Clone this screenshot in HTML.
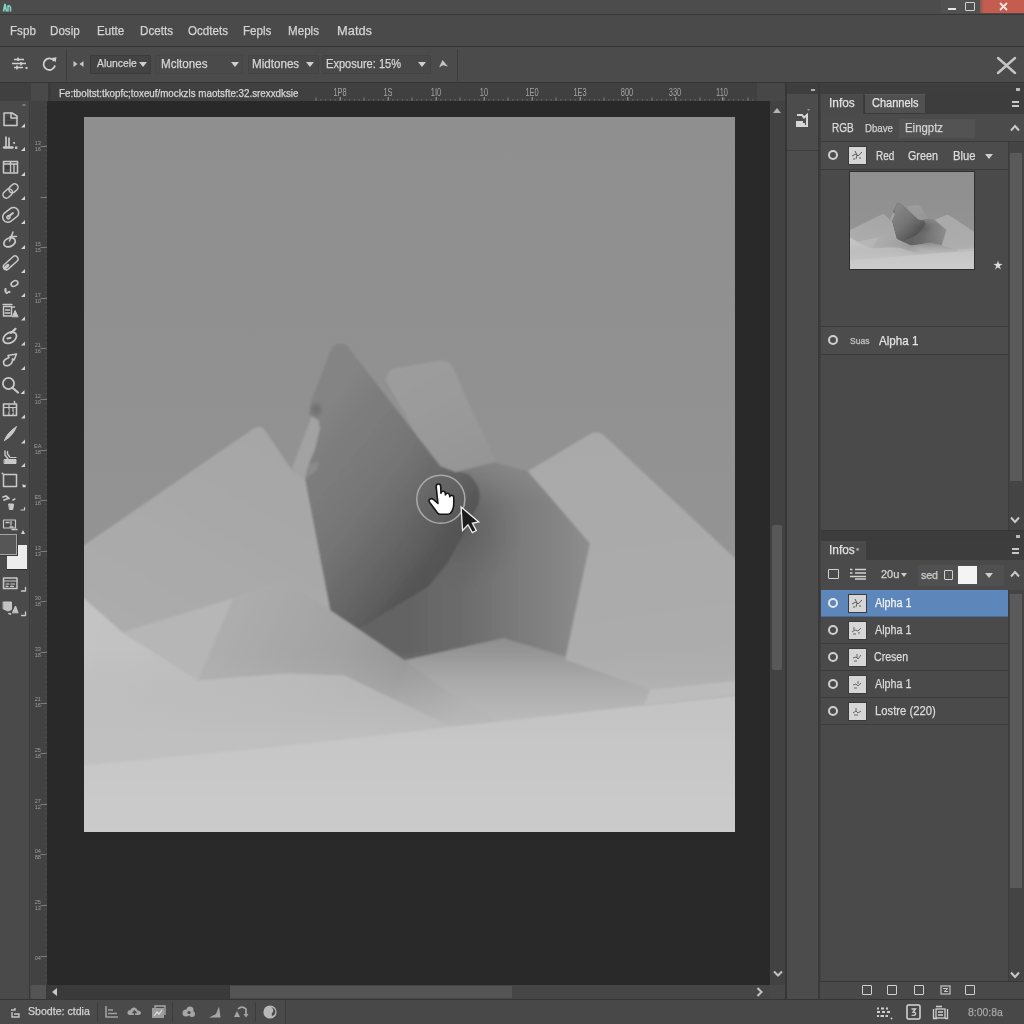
<!DOCTYPE html>
<html><head><meta charset="utf-8"><title>Editor</title>
<style>
*{box-sizing:border-box;margin:0;padding:0}
html,body{width:1024px;height:1024px;overflow:hidden;background:#474747}
body{position:relative;font-family:"Liberation Sans",sans-serif;color:#d2d2d2;font-size:12px}
.a{position:absolute}
.t{position:absolute;white-space:nowrap;line-height:1;transform-origin:0 50%;-webkit-text-stroke:.25px currentColor}
#titlebar{left:0;top:0;width:1024px;height:14px;background:#4c4c4c}
#menubar{left:0;top:14px;width:1024px;height:33px;background:#4a4a4a;border-top:1px solid #383838;border-bottom:1px solid #333}
#optbar{left:0;top:47px;width:1024px;height:36px;background:#4b4b4b;border-bottom:1px solid #353535}
#menubar .t{top:10px;font-size:12.5px;color:#d4d4d4;transform:scaleX(.93)}
#optbar .t{font-size:12.5px;color:#d6d6d6;top:11px;transform:scaleX(.93)}
.box{position:absolute;top:8px;height:19px;background:#434343;border:1px solid #3b3b3b;border-radius:1px}
.tri{position:absolute;width:0;height:0;border-left:4px solid transparent;border-right:4px solid transparent;border-top:5px solid #cfcfcf}
.triu{position:absolute;width:0;height:0;border-left:4px solid transparent;border-right:4px solid transparent;border-bottom:5px solid #bdbdbd}
#toolbar{left:0;top:83px;width:30px;height:917px;background:#4a4a4a;border-right:1px solid #3a3a3a}
#vruler{left:31px;top:100px;width:16px;height:885px;background:#424242}
#hruler{left:46px;top:83px;width:740px;height:18px;background:#404040}
#stage{left:47px;top:101px;width:723px;height:884px;background:#292929}
#vscroll{left:770px;top:101px;width:16px;height:884px;background:#424242}
#hscroll{left:46px;top:985px;width:724px;height:14px;background:#464646}
#status{left:0;top:999px;width:1024px;height:25px;background:#484848;border-top:1px solid #353535}
#midcol{left:785px;top:83px;width:35px;height:916px;background:#4c4c4c;border-left:2px solid #363636;border-right:2px solid #3a3a3a}
#rp{left:820px;top:83px;width:204px;height:916px;background:#4a4a4a}
.row{position:absolute;left:0;width:188px;height:27px;border-bottom:1px solid #3c3c3c}
.row .t{font-size:12.5px;color:#dcdcdc;top:7px}
.eye{position:absolute;left:8px;top:8px;width:10px;height:10px;border:2.2px solid #d0d0d0;border-radius:50%}
.th{position:absolute;left:27.5px;top:3.5px;width:19px;height:19px;background:#d6d6d6;border:1px solid #3a3a3a;overflow:hidden}
</style></head><body>
<!--TOP-->
<div class="a" id="titlebar">
<svg class="a" style="left:2px;top:2px" width="10" height="11" viewBox="0 0 10 11"><path d="M1.5,9.5 L3,2 L4.5,9.5 M6,9.5 L6,4 Q8.5,3.5 8.5,6 L8.5,9.5" fill="none" stroke="#7fd8c4" stroke-width="1.6"/></svg>
<div class="a" style="left:941px;top:0;width:41px;height:13px;background:#515151"></div><div class="a" style="left:948px;top:7.5px;width:8px;height:2.5px;background:#e4e4e4"></div>
<div class="a" style="left:965px;top:1.5px;width:10px;height:9px;border:1.5px solid #d0d0d0;border-radius:1px"></div>
<div class="a" style="left:980px;top:0;width:44px;height:13px;background:linear-gradient(90deg,#8a5750 0,#c45d4f 4px,#c45d4f 100%)"></div>
<svg class="a" style="left:999px;top:1.5px" width="9" height="9" viewBox="0 0 9 9"><path d="M1,1 L8,8 M8,1 L1,8" stroke="#f0e4e2" stroke-width="1.9" fill="none"/></svg>
</div>
<div class="a" id="menubar">
<span class="t" style="left:10px">Fspb</span>
<span class="t" style="left:50px">Dosip</span>
<span class="t" style="left:97px">Eutte</span>
<span class="t" style="left:140px">Dcetts</span>
<span class="t" style="left:188px">Ocdtets</span>
<span class="t" style="left:243px">Fepls</span>
<span class="t" style="left:288px">Mepls</span>
<span class="t" style="left:337px;transform:scaleX(1.03)">Matds</span>
</div>
<div class="a" id="optbar">
<svg class="a" style="left:11px;top:9px" width="18" height="16" viewBox="0 0 18 16"><path d="M3,3.5 H13 M1,7.5 H15 M3,11.5 H12 M7,1.5 V5 M10,6 V9.5 M6,9.5 V13.5" stroke="#d0d0d0" stroke-width="1.6" fill="none"/><rect x="14.5" y="11" width="2" height="2" fill="#d0d0d0"/></svg>
<svg class="a" style="left:41px;top:9px" width="18" height="17" viewBox="0 0 18 17"><path d="M13.2,5 A5.8,5.8 0 1 0 14,9.5" stroke="#d0d0d0" stroke-width="1.8" fill="none"/><path d="M10.5,2 L15.5,1.2 L14.6,6.2 Z" fill="#d0d0d0"/></svg>
<div class="a" style="left:66px;top:2px;width:1px;height:32px;background:#3c3c3c"></div>
<svg class="a" style="left:73px;top:13px" width="11" height="8" viewBox="0 0 11 8"><path d="M0.5,1 L4.5,4 L0.5,7 Z M10.5,1 L6.5,4 L10.5,7 Z" fill="#c8c8c8"/></svg>
<div class="box" style="left:90px;width:61px"></div>
<span class="t" style="left:97px;font-size:11.5px;transform:scaleX(.9)">Aluncele</span>
<div class="tri" style="left:139px;top:15px"></div>
<div class="box" style="left:155px;width:88px;background:#4a4a4a;border-color:#464646"></div>
<span class="t" style="left:161px">Mcltones</span>
<div class="tri" style="left:231px;top:15px"></div>
<div class="box" style="left:248px;width:71px;background:#484848;border-color:#434343"></div>
<span class="t" style="left:252px">Midtones</span>
<div class="tri" style="left:306px;top:15px"></div>
<div class="box" style="left:322px;width:109px;background:#484848;border-color:#434343"></div>
<span class="t" style="left:326px;transform:scaleX(.885)">Exposure: 15%</span>
<div class="tri" style="left:418px;top:15px"></div>
<svg class="a" style="left:438px;top:12px" width="11" height="10" viewBox="0 0 11 10"><path d="M1,8.5 L4.5,1 L10,7.5 L5,6.2 Z" fill="#c4c4c4"/></svg>
<div class="a" style="left:457px;top:2px;width:1px;height:32px;background:#3c3c3c"></div>
<svg class="a" style="left:996px;top:9px" width="21" height="19" viewBox="0 0 21 19"><path d="M2,2 L19,17 M19,2 L2,17" stroke="#c6c6c6" stroke-width="2.4" fill="none" stroke-linecap="round"/></svg>
</div>
<!--/TOP-->
<!--TB--><div class="a" id="toolbar">
<div class="a" style="left:0;top:0;width:30px;height:8px;background:#3e3e3e"></div>
<svg class="a" style="left:0;top:0" width="30" height="917" viewBox="0 83 30 917" fill="none" stroke="#c9c9c9" stroke-width="1.5" stroke-linejoin="round" stroke-linecap="round">
<path d="M1,87.5 H5" stroke="#9a9a9a" stroke-width="1.2"/>
<path d="M23,105 l2,0" stroke="#8a8a8a" stroke-width="1.6"/>
<!-- 1 -->
<path d="M4,113 H12 L17,116 V125.5 H4 Z"/><path d="M6,117 H11 V119.5 H6 Z M6,121 H14.5 V123.5 H6Z" fill="#3e3e3e" stroke="none"/><path d="M11,113 V118 H17"/>
<!-- 2 -->
<path d="M6,137 V146.5 M9,138 V146.5" stroke-width="1.7"/><path d="M4,147.5 H12.5" stroke-width="2.4"/><rect x="15" y="146.5" width="2.4" height="2.4" fill="#c9c9c9" stroke="none"/><rect x="13.2" y="142" width="1.8" height="1.8" fill="#c9c9c9" stroke="none"/>
<!-- 3 -->
<rect x="3.5" y="161.5" width="14" height="11.5"/><path d="M4,164 H17 M10.5,162 V172 M14,165 V172" stroke-width="1.3"/><rect x="5" y="165.5" width="4.5" height="3.5" fill="#3e3e3e" stroke="none"/>
<!-- 4 chain -->
<g transform="rotate(-42 10.5 191)"><rect x="1.5" y="187.6" width="10.5" height="6.8" rx="3.4"/><rect x="9.5" y="187.6" width="10" height="6.8" rx="3.4"/></g>
<!-- 5 chain -->
<g transform="rotate(-38 10.5 215)"><rect x="2" y="209.8" width="17.5" height="10.4" rx="5.2"/><path d="M8,215 H13.5" stroke-width="2"/><circle cx="7.5" cy="215.5" r="1.6"/></g>
<!-- 6 lasso -->
<g transform="rotate(-25 10 241)"><ellipse cx="9" cy="242" rx="6" ry="4.2" stroke-width="1.7"/></g><path d="M13,232 L9.5,241 M10,236.5 H16.5" stroke-width="1.5"/>
<!-- 7 pen -->
<g transform="rotate(-42 10.5 263)"><rect x="2" y="260" width="17.5" height="6" rx="3"/><path d="M2.5,263 H7" stroke-width="3"/></g>
<!-- 8 -->
<g transform="rotate(-30 14.5 283.5)"><ellipse cx="14.5" cy="283.5" rx="3.6" ry="2.5" stroke-width="1.6"/></g><path d="M5.5,289 V291.5 M8.5,292 H9.5 M6.5,293 H7" stroke-width="2.2"/>
<!-- 9 stamp -->
<rect x="3.5" y="306.5" width="8" height="9.5" stroke-width="1.4"/><path d="M3,304.5 H12 M5.5,310 H9.5 M5,313 H10" stroke-width="1.3"/><path d="M12.5,316.5 L15,310.5 L18,316.5 Z" fill="#c9c9c9" stroke-width="1"/><path d="M12,307 H14.5" stroke-width="1.6"/>
<!-- 10 -->
<g transform="rotate(-32 10 337)"><ellipse cx="9.5" cy="337.5" rx="7.2" ry="5" stroke-width="1.8"/><path d="M13,334 L19,333" stroke-width="2.2"/><path d="M7,337 l3,1" stroke-width="2"/></g>
<!-- 11 -->
<path d="M4,364.5 Q2.5,361 6,359 L9,357.5 L8,355.5 L16.5,354 L14,360 L12.5,358.8 Q13,363 9,365.2 Q5.5,366.5 4,364.5 Z" stroke-width="1.6"/>
<!-- 12 zoom -->
<circle cx="8.5" cy="383.5" r="5.6" stroke-width="1.8"/><path d="M12.8,388 L18,392.5" stroke-width="2.2"/>
<!-- 13 -->
<rect x="3.5" y="404" width="13" height="11.5" stroke-width="1.6"/><path d="M4,407.5 H16 M9,405 V415 M13,408 V415" stroke-width="1.2"/><path d="M5.5,410.5 H8 M10.5,412.5 H12" stroke-width="1.8" stroke="#3e3e3e"/><path d="M14.5,401.5 V404" stroke-width="1.4"/>
<!-- 14 brush -->
<path d="M4.5,440.5 Q6,434 16.5,426.5 Q13,436 4.5,440.5 Z" fill="#c9c9c9" stroke-width="1"/>
<!-- 15 stamp -->
<path d="M4.5,459.5 H16 V463.5 H4.5 Z" fill="#c9c9c9" stroke-width="1"/><path d="M5,451 V455 L8,459 M7.5,451.5 V454 L9.5,456.5" stroke-width="1.4"/><path d="M10,457.5 H16" stroke-width="1.2"/>
<!-- 16 rect -->
<rect x="3.5" y="474.5" width="13" height="12" stroke-width="1.5"/><circle cx="2.5" cy="473.5" r="1" fill="#c9c9c9" stroke="none"/>
<path d="M22.5,484 l2,1.2 l1,-1 l0.2,3 l-3,0z" fill="#ddd" stroke="none"/>
<!-- 17 bucket -->
<path d="M3,497 L6,496 L9,498.5 M4,500 L7,499" stroke-width="1.8"/><path d="M9,504 H13.5 L12.8,509.5 H9.8 Z" fill="#c9c9c9" stroke-width="1"/><path d="M13,500 L14.8,499" stroke-width="1.6"/>
<path d="M21,510 H24.5 V507.5" stroke-width="1.2"/>
<!-- 18 -->
<rect x="3.5" y="520" width="12" height="8" stroke-width="1.2"/><path d="M6,522.5 H9 M11,521.5 V525 M10,527 H13 M12,529.5 H17" stroke-width="1.3"/>
<!-- 20 -->
<rect x="3.5" y="578" width="13.5" height="10.5" stroke-width="1.5"/><path d="M4,581 H16.5 M6,584 H9 M11,584 H14.5 M6,586.3 H8 M10.5,586.3 H13.5" stroke-width="1.2"/>
<path d="M21.5,591 H25.5 V587.5" stroke-width="1.3"/>
<!-- 21 -->
<path d="M3.5,602 H11.5 V609.5 L8,611 L3.5,609 Z" fill="#c2c2c2" stroke-width="1"/><path d="M12.5,612.5 L15.5,606 L18,612.5 Z" fill="#c2c2c2" stroke-width="1"/><path d="M9,613.5 l1.5,0.6" stroke-width="1.6"/>
<path d="M21.5,615.5 H25.5 V612" stroke-width="1.3"/>
<g fill="#d4d4d4" stroke="none">
<path d="M21,127.5 L25,123.5 L25,127.5 Z"/><path d="M21,151 L25,147 L25,151 Z"/><path d="M21,176 L25,172 L25,176 Z"/><path d="M21,200 L25,196 L25,200 Z"/><path d="M21,224 L25,220 L25,224 Z"/>
<path d="M21,249 L25,245 L25,249 Z"/><path d="M21,273 L25,269 L25,273 Z"/><path d="M21,297 L25,293 L25,297 Z"/><path d="M21,320.5 L25,316.5 L25,320.5 Z"/><path d="M21,345.5 L25,341.5 L25,345.5 Z"/>
<path d="M21,370 L25,366 L25,370 Z"/><path d="M20.5,394 L24.5,390 L24.5,394 Z"/><path d="M21,418.5 L25,414.5 L25,418.5 Z"/><path d="M21,443.5 L25,439.5 L25,443.5 Z"/><path d="M21,467 L25,463 L25,467 Z"/>
<path d="M21,534 L23,530 L25,534 Z"/>
</g>
</svg>
<div class="a" style="left:7px;top:462px;width:20px;height:24px;background:#ececec;box-shadow:0 1px 0 #2e2e2e"></div>
<div class="a" style="left:-2px;top:451px;width:19px;height:21px;background:#565656;border:1.5px solid #a4a4a4;box-shadow:1px 1px 0 #3a3a3a"></div>
</div>
<!--/TB-->
<!--VR--><div class="a" id="vruler"><svg class="a" style="left:0;top:0;opacity:.99" width="17" height="885" viewBox="31 100 16 885"><path d="M40,146.5 H47" stroke="#7c7c7c" stroke-width="1"/><text x="37.3" y="144.8" font-size="5.6" fill="#9c9c9c" text-anchor="middle" font-family="Liberation Sans, sans-serif">13</text><text x="37.3" y="150.7" font-size="5.6" fill="#9c9c9c" text-anchor="middle" font-family="Liberation Sans, sans-serif">16</text><path d="M40,197.5 H47" stroke="#7c7c7c" stroke-width="1"/><path d="M40,247.5 H47" stroke="#7c7c7c" stroke-width="1"/><text x="37.3" y="246.0" font-size="5.6" fill="#9c9c9c" text-anchor="middle" font-family="Liberation Sans, sans-serif">15</text><text x="37.3" y="251.9" font-size="5.6" fill="#9c9c9c" text-anchor="middle" font-family="Liberation Sans, sans-serif">15</text><path d="M40,298.5 H47" stroke="#7c7c7c" stroke-width="1"/><text x="37.3" y="296.6" font-size="5.6" fill="#9c9c9c" text-anchor="middle" font-family="Liberation Sans, sans-serif">17</text><text x="37.3" y="302.5" font-size="5.6" fill="#9c9c9c" text-anchor="middle" font-family="Liberation Sans, sans-serif">10</text><path d="M40,348.5 H47" stroke="#7c7c7c" stroke-width="1"/><text x="37.3" y="347.2" font-size="5.6" fill="#9c9c9c" text-anchor="middle" font-family="Liberation Sans, sans-serif">21</text><text x="37.3" y="353.1" font-size="5.6" fill="#9c9c9c" text-anchor="middle" font-family="Liberation Sans, sans-serif">16</text><path d="M40,399.5 H47" stroke="#7c7c7c" stroke-width="1"/><text x="37.3" y="397.8" font-size="5.6" fill="#9c9c9c" text-anchor="middle" font-family="Liberation Sans, sans-serif">12</text><text x="37.3" y="403.7" font-size="5.6" fill="#9c9c9c" text-anchor="middle" font-family="Liberation Sans, sans-serif">10</text><path d="M40,450.5 H47" stroke="#7c7c7c" stroke-width="1"/><text x="37.3" y="448.4" font-size="5.6" fill="#9c9c9c" text-anchor="middle" font-family="Liberation Sans, sans-serif">EA</text><text x="37.3" y="454.3" font-size="5.6" fill="#9c9c9c" text-anchor="middle" font-family="Liberation Sans, sans-serif">18</text><path d="M40,500.5 H47" stroke="#7c7c7c" stroke-width="1"/><text x="37.3" y="499.0" font-size="5.6" fill="#9c9c9c" text-anchor="middle" font-family="Liberation Sans, sans-serif">E5</text><text x="37.3" y="504.9" font-size="5.6" fill="#9c9c9c" text-anchor="middle" font-family="Liberation Sans, sans-serif">18</text><path d="M40,551.5 H47" stroke="#7c7c7c" stroke-width="1"/><text x="37.3" y="549.6" font-size="5.6" fill="#9c9c9c" text-anchor="middle" font-family="Liberation Sans, sans-serif">13</text><text x="37.3" y="555.5" font-size="5.6" fill="#9c9c9c" text-anchor="middle" font-family="Liberation Sans, sans-serif">13</text><path d="M40,601.5 H47" stroke="#7c7c7c" stroke-width="1"/><text x="37.3" y="600.2" font-size="5.6" fill="#9c9c9c" text-anchor="middle" font-family="Liberation Sans, sans-serif">30</text><text x="37.3" y="606.1" font-size="5.6" fill="#9c9c9c" text-anchor="middle" font-family="Liberation Sans, sans-serif">18</text><path d="M40,652.5 H47" stroke="#7c7c7c" stroke-width="1"/><text x="37.3" y="650.8" font-size="5.6" fill="#9c9c9c" text-anchor="middle" font-family="Liberation Sans, sans-serif">33</text><text x="37.3" y="656.7" font-size="5.6" fill="#9c9c9c" text-anchor="middle" font-family="Liberation Sans, sans-serif">18</text><path d="M40,703.5 H47" stroke="#7c7c7c" stroke-width="1"/><text x="37.3" y="701.4" font-size="5.6" fill="#9c9c9c" text-anchor="middle" font-family="Liberation Sans, sans-serif">21</text><text x="37.3" y="707.3" font-size="5.6" fill="#9c9c9c" text-anchor="middle" font-family="Liberation Sans, sans-serif">16</text><path d="M40,753.5 H47" stroke="#7c7c7c" stroke-width="1"/><text x="37.3" y="752.0" font-size="5.6" fill="#9c9c9c" text-anchor="middle" font-family="Liberation Sans, sans-serif">25</text><text x="37.3" y="757.9" font-size="5.6" fill="#9c9c9c" text-anchor="middle" font-family="Liberation Sans, sans-serif">18</text><path d="M40,804.5 H47" stroke="#7c7c7c" stroke-width="1"/><text x="37.3" y="802.6" font-size="5.6" fill="#9c9c9c" text-anchor="middle" font-family="Liberation Sans, sans-serif">27</text><text x="37.3" y="808.5" font-size="5.6" fill="#9c9c9c" text-anchor="middle" font-family="Liberation Sans, sans-serif">12</text><path d="M40,854.5 H47" stroke="#7c7c7c" stroke-width="1"/><text x="37.3" y="853.2" font-size="5.6" fill="#9c9c9c" text-anchor="middle" font-family="Liberation Sans, sans-serif">04</text><text x="37.3" y="859.1" font-size="5.6" fill="#9c9c9c" text-anchor="middle" font-family="Liberation Sans, sans-serif">88</text><path d="M40,905.5 H47" stroke="#7c7c7c" stroke-width="1"/><text x="37.3" y="903.8" font-size="5.6" fill="#9c9c9c" text-anchor="middle" font-family="Liberation Sans, sans-serif">25</text><text x="37.3" y="909.7" font-size="5.6" fill="#9c9c9c" text-anchor="middle" font-family="Liberation Sans, sans-serif">13</text><path d="M40,956.5 H47" stroke="#7c7c7c" stroke-width="1"/><text x="37.3" y="960.3" font-size="5.6" fill="#9c9c9c" text-anchor="middle" font-family="Liberation Sans, sans-serif">04</text><path d="M44.5,105.0 H46.5 M44.5,110.1 H46.5 M44.5,115.1 H46.5 M44.5,120.2 H46.5 M44.5,125.2 H46.5 M44.5,130.3 H46.5 M44.5,135.4 H46.5 M44.5,140.4 H46.5 M44.5,145.5 H46.5 M44.5,150.5 H46.5 M44.5,155.6 H46.5 M44.5,160.7 H46.5 M44.5,165.7 H46.5 M44.5,170.8 H46.5 M44.5,175.8 H46.5 M44.5,180.9 H46.5 M44.5,186.0 H46.5 M44.5,191.0 H46.5 M44.5,196.1 H46.5 M44.5,201.1 H46.5 M44.5,206.2 H46.5 M44.5,211.3 H46.5 M44.5,216.3 H46.5 M44.5,221.4 H46.5 M44.5,226.4 H46.5 M44.5,231.5 H46.5 M44.5,236.6 H46.5 M44.5,241.6 H46.5 M44.5,246.7 H46.5 M44.5,251.7 H46.5 M44.5,256.8 H46.5 M44.5,261.9 H46.5 M44.5,266.9 H46.5 M44.5,272.0 H46.5 M44.5,277.0 H46.5 M44.5,282.1 H46.5 M44.5,287.2 H46.5 M44.5,292.2 H46.5 M44.5,297.3 H46.5 M44.5,302.3 H46.5 M44.5,307.4 H46.5 M44.5,312.5 H46.5 M44.5,317.5 H46.5 M44.5,322.6 H46.5 M44.5,327.6 H46.5 M44.5,332.7 H46.5 M44.5,337.8 H46.5 M44.5,342.8 H46.5 M44.5,347.9 H46.5 M44.5,352.9 H46.5 M44.5,358.0 H46.5 M44.5,363.1 H46.5 M44.5,368.1 H46.5 M44.5,373.2 H46.5 M44.5,378.2 H46.5 M44.5,383.3 H46.5 M44.5,388.4 H46.5 M44.5,393.4 H46.5 M44.5,398.5 H46.5 M44.5,403.5 H46.5 M44.5,408.6 H46.5 M44.5,413.7 H46.5 M44.5,418.7 H46.5 M44.5,423.8 H46.5 M44.5,428.8 H46.5 M44.5,433.9 H46.5 M44.5,439.0 H46.5 M44.5,444.0 H46.5 M44.5,449.1 H46.5 M44.5,454.1 H46.5 M44.5,459.2 H46.5 M44.5,464.3 H46.5 M44.5,469.3 H46.5 M44.5,474.4 H46.5 M44.5,479.4 H46.5 M44.5,484.5 H46.5 M44.5,489.6 H46.5 M44.5,494.6 H46.5 M44.5,499.7 H46.5 M44.5,504.7 H46.5 M44.5,509.8 H46.5 M44.5,514.9 H46.5 M44.5,519.9 H46.5 M44.5,525.0 H46.5 M44.5,530.0 H46.5 M44.5,535.1 H46.5 M44.5,540.2 H46.5 M44.5,545.2 H46.5 M44.5,550.3 H46.5 M44.5,555.3 H46.5 M44.5,560.4 H46.5 M44.5,565.5 H46.5 M44.5,570.5 H46.5 M44.5,575.6 H46.5 M44.5,580.6 H46.5 M44.5,585.7 H46.5 M44.5,590.8 H46.5 M44.5,595.8 H46.5 M44.5,600.9 H46.5 M44.5,605.9 H46.5 M44.5,611.0 H46.5 M44.5,616.1 H46.5 M44.5,621.1 H46.5 M44.5,626.2 H46.5 M44.5,631.2 H46.5 M44.5,636.3 H46.5 M44.5,641.4 H46.5 M44.5,646.4 H46.5 M44.5,651.5 H46.5 M44.5,656.5 H46.5 M44.5,661.6 H46.5 M44.5,666.7 H46.5 M44.5,671.7 H46.5 M44.5,676.8 H46.5 M44.5,681.8 H46.5 M44.5,686.9 H46.5 M44.5,692.0 H46.5 M44.5,697.0 H46.5 M44.5,702.1 H46.5 M44.5,707.1 H46.5 M44.5,712.2 H46.5 M44.5,717.3 H46.5 M44.5,722.3 H46.5 M44.5,727.4 H46.5 M44.5,732.4 H46.5 M44.5,737.5 H46.5 M44.5,742.6 H46.5 M44.5,747.6 H46.5 M44.5,752.7 H46.5 M44.5,757.7 H46.5 M44.5,762.8 H46.5 M44.5,767.9 H46.5 M44.5,772.9 H46.5 M44.5,778.0 H46.5 M44.5,783.0 H46.5 M44.5,788.1 H46.5 M44.5,793.2 H46.5 M44.5,798.2 H46.5 M44.5,803.3 H46.5 M44.5,808.3 H46.5 M44.5,813.4 H46.5 M44.5,818.5 H46.5 M44.5,823.5 H46.5 M44.5,828.6 H46.5 M44.5,833.6 H46.5 M44.5,838.7 H46.5 M44.5,843.8 H46.5 M44.5,848.8 H46.5 M44.5,853.9 H46.5 M44.5,858.9 H46.5 M44.5,864.0 H46.5 M44.5,869.1 H46.5 M44.5,874.1 H46.5 M44.5,879.2 H46.5 M44.5,884.2 H46.5 M44.5,889.3 H46.5 M44.5,894.4 H46.5 M44.5,899.4 H46.5 M44.5,904.5 H46.5 M44.5,909.5 H46.5 M44.5,914.6 H46.5 M44.5,919.7 H46.5 M44.5,924.7 H46.5 M44.5,929.8 H46.5 M44.5,934.8 H46.5 M44.5,939.9 H46.5 M44.5,945.0 H46.5 M44.5,950.0 H46.5 M44.5,955.1 H46.5 M44.5,960.1 H46.5 M44.5,965.2 H46.5 M44.5,970.3 H46.5 M44.5,975.3 H46.5 M44.5,980.4 H46.5" stroke="#505050" stroke-width="1"/></svg></div><!--/VR-->
<!--HR--><div class="a" id="hruler"><div class="a" style="left:-46px;top:0;width:46px;height:18px;background:#404040"></div><div class="a" style="left:-15px;top:0;width:17px;height:18px;background:#494949"></div><div class="a" style="left:2px;top:0;width:3px;height:18px;background:#3a3a3a"></div><span class="t" style="left:13px;top:4.5px;font-size:11px;color:#d8d8d8;transform:scaleX(.89)">Fe:tboltst:tkopfc;toxeuf/mockzls maotsfte:32.srexxdksie</span><svg class="a" style="left:0;top:0;opacity:.99" width="740" height="18" viewBox="46 83 740 18"><text transform="translate(340,95.8) scale(.73,1)" font-size="10.2" fill="#a4a4a4" text-anchor="middle" font-family="Liberation Sans, sans-serif">1P8</text><path d="M340.5,97 V100.5" stroke="#999" stroke-width="1"/><text transform="translate(388,95.8) scale(.73,1)" font-size="10.2" fill="#a4a4a4" text-anchor="middle" font-family="Liberation Sans, sans-serif">1S</text><path d="M388.5,97 V100.5" stroke="#999" stroke-width="1"/><text transform="translate(436,95.8) scale(.73,1)" font-size="10.2" fill="#a4a4a4" text-anchor="middle" font-family="Liberation Sans, sans-serif">1I0</text><path d="M436.5,97 V100.5" stroke="#999" stroke-width="1"/><text transform="translate(484,95.8) scale(.73,1)" font-size="10.2" fill="#a4a4a4" text-anchor="middle" font-family="Liberation Sans, sans-serif">10</text><path d="M484.5,97 V100.5" stroke="#999" stroke-width="1"/><text transform="translate(532,95.8) scale(.73,1)" font-size="10.2" fill="#a4a4a4" text-anchor="middle" font-family="Liberation Sans, sans-serif">1E0</text><path d="M532.5,97 V100.5" stroke="#999" stroke-width="1"/><text transform="translate(580,95.8) scale(.73,1)" font-size="10.2" fill="#a4a4a4" text-anchor="middle" font-family="Liberation Sans, sans-serif">1E3</text><path d="M580.5,97 V100.5" stroke="#999" stroke-width="1"/><text transform="translate(627,95.8) scale(.73,1)" font-size="10.2" fill="#a4a4a4" text-anchor="middle" font-family="Liberation Sans, sans-serif">800</text><path d="M627.5,97 V100.5" stroke="#999" stroke-width="1"/><text transform="translate(675,95.8) scale(.73,1)" font-size="10.2" fill="#a4a4a4" text-anchor="middle" font-family="Liberation Sans, sans-serif">330</text><path d="M675.5,97 V100.5" stroke="#999" stroke-width="1"/><text transform="translate(722,95.8) scale(.73,1)" font-size="10.2" fill="#a4a4a4" text-anchor="middle" font-family="Liberation Sans, sans-serif">110</text><path d="M722.5,97 V100.5" stroke="#999" stroke-width="1"/><path d="M316.0,99 V100.5 M320.8,99 V100.5 M325.6,99 V100.5 M330.4,99 V100.5 M335.2,99 V100.5 M340.0,99 V100.5 M344.8,99 V100.5 M349.6,99 V100.5 M354.4,99 V100.5 M359.2,99 V100.5 M364.0,99 V100.5 M368.8,99 V100.5 M373.6,99 V100.5 M378.4,99 V100.5 M383.2,99 V100.5 M388.0,99 V100.5 M392.8,99 V100.5 M397.6,99 V100.5 M402.4,99 V100.5 M407.2,99 V100.5 M412.0,99 V100.5 M416.8,99 V100.5 M421.6,99 V100.5 M426.4,99 V100.5 M431.2,99 V100.5 M436.0,99 V100.5 M440.8,99 V100.5 M445.6,99 V100.5 M450.4,99 V100.5 M455.2,99 V100.5 M460.0,99 V100.5 M464.8,99 V100.5 M469.6,99 V100.5 M474.4,99 V100.5 M479.2,99 V100.5 M484.0,99 V100.5 M488.8,99 V100.5 M493.6,99 V100.5 M498.4,99 V100.5 M503.2,99 V100.5 M508.0,99 V100.5 M512.8,99 V100.5 M517.6,99 V100.5 M522.4,99 V100.5 M527.2,99 V100.5 M532.0,99 V100.5 M536.8,99 V100.5 M541.6,99 V100.5 M546.4,99 V100.5 M551.2,99 V100.5 M556.0,99 V100.5 M560.8,99 V100.5 M565.6,99 V100.5 M570.4,99 V100.5 M575.2,99 V100.5 M580.0,99 V100.5 M584.8,99 V100.5 M589.6,99 V100.5 M594.4,99 V100.5 M599.2,99 V100.5 M604.0,99 V100.5 M608.8,99 V100.5 M613.6,99 V100.5 M618.4,99 V100.5 M623.2,99 V100.5 M628.0,99 V100.5 M632.8,99 V100.5 M637.6,99 V100.5 M642.4,99 V100.5 M647.2,99 V100.5 M652.0,99 V100.5 M656.8,99 V100.5 M661.6,99 V100.5 M666.4,99 V100.5 M671.2,99 V100.5 M676.0,99 V100.5 M680.8,99 V100.5 M685.6,99 V100.5 M690.4,99 V100.5 M695.2,99 V100.5 M700.0,99 V100.5 M704.8,99 V100.5 M709.6,99 V100.5 M714.4,99 V100.5 M719.2,99 V100.5 M724.0,99 V100.5 M728.8,99 V100.5 M733.6,99 V100.5 M738.4,99 V100.5 M743.2,99 V100.5 M748.0,99 V100.5 M752.8,99 V100.5" stroke="#6c6c6c" stroke-width="1"/><path d="M316.0,97.5 V100.5 M340.0,97.5 V100.5 M364.0,97.5 V100.5 M388.0,97.5 V100.5 M412.0,97.5 V100.5 M436.0,97.5 V100.5 M460.0,97.5 V100.5 M484.0,97.5 V100.5 M508.0,97.5 V100.5 M532.0,97.5 V100.5 M556.0,97.5 V100.5 M580.0,97.5 V100.5 M604.0,97.5 V100.5 M628.0,97.5 V100.5 M652.0,97.5 V100.5 M676.0,97.5 V100.5 M700.0,97.5 V100.5 M724.0,97.5 V100.5 M748.0,97.5 V100.5" stroke="#7c7c7c" stroke-width="1"/><rect x="757" y="83" width="29" height="18" fill="#484848"/></svg></div><!--/HR-->
<div class="a" id="stage"></div>
<!--ART--><svg class="a" id="art" style="left:83.5px;top:116.5px" width="651" height="715.5" preserveAspectRatio="none" viewBox="84 117 650 715">
<defs>
<linearGradient id="gSky" x1="0" y1="117" x2="0" y2="620" gradientUnits="userSpaceOnUse"><stop offset="0" stop-color="#8f8f8f"/><stop offset=".55" stop-color="#919191"/><stop offset="1" stop-color="#959595"/></linearGradient>
<linearGradient id="gBlk" x1="410" y1="362" x2="470" y2="475" gradientUnits="userSpaceOnUse"><stop offset="0" stop-color="#9d9d9d"/><stop offset=".6" stop-color="#999"/><stop offset="1" stop-color="#959595"/></linearGradient>
<linearGradient id="gLM" x1="250" y1="430" x2="120" y2="660" gradientUnits="userSpaceOnUse"><stop offset="0" stop-color="#a6a6a6"/><stop offset="1" stop-color="#adadad"/></linearGradient>
<linearGradient id="gRM" x1="600" y1="430" x2="640" y2="700" gradientUnits="userSpaceOnUse"><stop offset="0" stop-color="#a9a9a9"/><stop offset="1" stop-color="#adadad"/></linearGradient>
<linearGradient id="gPk" x1="315" y1="420" x2="470" y2="540" gradientUnits="userSpaceOnUse"><stop offset="0" stop-color="#848484"/><stop offset=".13" stop-color="#7e7e7e"/><stop offset=".37" stop-color="#787878"/><stop offset=".47" stop-color="#747474"/><stop offset=".57" stop-color="#6e6e6e"/><stop offset=".78" stop-color="#616161"/><stop offset=".9" stop-color="#565656"/><stop offset="1" stop-color="#525252"/></linearGradient>
<linearGradient id="gHx" x1="410" y1="0" x2="590" y2="0" gradientUnits="userSpaceOnUse"><stop offset="0" stop-color="#646464"/><stop offset=".3" stop-color="#6c6c6c"/><stop offset=".5" stop-color="#767676"/><stop offset=".72" stop-color="#808080"/><stop offset=".92" stop-color="#8a8a8a"/><stop offset="1" stop-color="#8d8d8d"/></linearGradient>
<linearGradient id="gHxT" x1="0" y1="462" x2="0" y2="505" gradientUnits="userSpaceOnUse"><stop offset="0" stop-color="#a0a0a0" stop-opacity=".38"/><stop offset="1" stop-color="#a0a0a0" stop-opacity="0"/></linearGradient><radialGradient id="gShade" cx="462" cy="530" r="60" gradientUnits="userSpaceOnUse"><stop offset="0" stop-color="#505050" stop-opacity=".5"/><stop offset="1" stop-color="#606060" stop-opacity="0"/></radialGradient>
<linearGradient id="gMid" x1="0" y1="638" x2="0" y2="735" gradientUnits="userSpaceOnUse"><stop offset="0" stop-color="#8f8f8f"/><stop offset=".45" stop-color="#a3a3a3"/><stop offset="1" stop-color="#b6b6b6"/></linearGradient>
<linearGradient id="gHill" x1="240" y1="600" x2="470" y2="700" gradientUnits="userSpaceOnUse"><stop offset="0" stop-color="#adadad"/><stop offset=".45" stop-color="#a2a2a2"/><stop offset=".7" stop-color="#959595"/><stop offset=".85" stop-color="#9c9c9c"/><stop offset="1" stop-color="#a8a8a8"/></linearGradient>
<linearGradient id="gFL" x1="90" y1="640" x2="450" y2="725" gradientUnits="userSpaceOnUse"><stop offset="0" stop-color="#c3c3c3"/><stop offset=".5" stop-color="#bdbdbd"/><stop offset="1" stop-color="#b0b0b0"/></linearGradient>
<linearGradient id="gFloor" x1="0" y1="695" x2="0" y2="832" gradientUnits="userSpaceOnUse"><stop offset="0" stop-color="#c3c3c3"/><stop offset=".5" stop-color="#c8c8c8"/><stop offset="1" stop-color="#cbcbcb"/></linearGradient>
<linearGradient id="gFade" x1="0" y1="650" x2="0" y2="735" gradientUnits="userSpaceOnUse"><stop offset="0" stop-color="#b4b4b4" stop-opacity="0"/><stop offset="1" stop-color="#c0c0c0" stop-opacity=".85"/></linearGradient>
<clipPath id="cDark"><path d="M311,402 L331,350 Q338,339 347,347 L440,466 L455,472 L494,462 L527,471 L589,543 L565,656 L503,638 L404,660 L358,629 L330,610 L305,479 L308.7,464 L314.5,450 L319.8,429 L318.6,420.4 L309,414 Z"/></clipPath>
<filter id="soft" x="-2%" y="-2%" width="104%" height="104%"><feGaussianBlur stdDeviation=".8"/></filter>
<filter id="soft2" x="-10%" y="-10%" width="120%" height="120%"><feGaussianBlur stdDeviation="2.5"/></filter>
</defs>
<g><rect x="84" y="117" width="650" height="715" fill="url(#gSky)"/>
<g filter="url(#soft)">
<!-- block behind peak -->
<path d="M386,381 Q385,370 395,368 L438,360.5 Q448,359 452,367 L494,459 Q496,464 490,465.5 L456,473 L436,470 Z" fill="url(#gBlk)"/>
<!-- right mountain -->
<path d="M527,471 L589,434 Q597,429 604,436 L734,558 L745,568 L745,705 L560,705 L565,656 L589,543 Z" fill="url(#gRM)"/>
<!-- left mountain -->
<path d="M74,552 L253,428.5 Q260,423.5 265,430.5 L291,469 L305,478 L330,610 L300,700 L74,700 Z" fill="url(#gLM)"/>
<!-- sliver -->
<path d="M311.6,415.5 L319,420.4 L320,429 L315,450 L309,464 L305,479 L291.5,468.5 Z" fill="#a2a2a2"/>
<!-- dark masses -->
<g clip-path="url(#cDark)">
<rect x="300" y="335" width="300" height="330" fill="url(#gHx)"/><rect x="430" y="455" width="170" height="75" fill="url(#gHxT)"/>
<path d="M311,402 L331,350 Q338,339 347,347 L440,466 L468,474 Q483,488 478,503 L466,528 L447,563 L427,587 L358,629 L330,610 L305,479 L308.7,464 L314.5,450 L319.8,429 L318.6,420.4 L309,414 Z" fill="url(#gPk)"/>
<rect x="300" y="335" width="300" height="330" fill="url(#gShade)"/>
<ellipse cx="316" cy="409" rx="5" ry="6" fill="#6e6e6e" filter="url(#soft2)"/><path d="M309,464 L318,461 L317,469 L306,478 Z" fill="#8e8e8e" fill-opacity=".8"/>
</g>
<!-- mid layer right -->
<path d="M390,663 L404,660 L503,638 L649,689 L745,679 L745,800 L390,800 Z" fill="url(#gMid)"/>
<!-- mid hill -->
<path d="M233,598 L283,579 L358,629 L404,660 L446,690 L540,745 L540,800 L180,800 L198,680 Z" fill="url(#gHill)"/>
<!-- light facet -->
<path d="M122,632 L233,598 L198,680 Z" fill="#b6b6b6"/>
<!-- front-left hill -->
<path d="M74,589 L84,598 L122,632 L198,680 L287,673 L344,675 L446,724 L500,745 L500,800 L74,800 Z" fill="url(#gFL)"/>
</g>
<rect x="74" y="650" width="671" height="190" fill="url(#gFade)"/>
<!-- floor -->
<path d="M74,766 L84,765 L270,747 L446,727 L643,705 L734,695 L745,694 L745,842 L74,842 Z" fill="url(#gFloor)" filter="url(#soft)"/>
<path d="M649,689 L745,679 L745,694 L643,705 Z" fill="#bcbcbc" filter="url(#soft)"/>
</g><!-- cursor -->
<circle cx="440.3" cy="499" r="24" fill="#6a6a6a" fill-opacity=".2" stroke="#a8a8a8" stroke-width="1.6"/>
<path d="M435.6,486.4 q0,-2.6 2.3,-2.6 q2.3,0 2.3,2.6 l0.2,6.6 q0.3,-2 2.1,-2 q2,0 2.2,2 l0.2,1.6 q0.3,-1.6 2,-1.6 q1.9,0 2.1,1.8 l0.2,1.6 q0.4,-1.4 1.9,-1.4 q2,0.2 2.1,2.2 l0,6.4 q0,5.4 -3,9 q-1,1.4 -3,1.4 l-7.4,0 q-1.8,0 -3,-1.6 l-7.6,-10.2 q-1.4,-2 0.2,-3.4 q1.7,-1.2 3.4,0.4 l4.6,4 Z" fill="#fff" stroke="#161616" stroke-width="1.6" stroke-linejoin="round"/>
<path d="M460.5,506.7 L462,530.1 L467.4,524.5 L471.8,532.3 L475.7,530.3 L471.8,523 L478.1,521.7 Z" fill="#1c1c1c" stroke="#eee" stroke-width="1.3" stroke-linejoin="miter"/>
</svg>
<!--/ART-->

<!--SC--><div class="a" id="vscroll">
<div class="triu" style="left:3px;top:7px;border-bottom-color:#b4b4b4"></div>
<div class="a" style="left:2px;top:424px;width:10px;height:145px;background:#585858;border-radius:2px"></div>
<svg class="a" style="left:3px;top:869px" width="10" height="8" viewBox="0 0 10 8"><path d="M1,1.5 L5,5.5 L9,1.5" stroke="#c4c4c4" stroke-width="2" fill="none"/></svg>
</div>
<div class="a" id="hscroll">
<div class="a" style="left:-15px;top:0;width:15px;height:14px;background:#545454"></div>
<div class="a" style="left:0;top:0;width:184px;height:14px;background:#3a3a3a"></div>
<div class="a" style="left:184px;top:1px;width:282px;height:12px;background:#545454"></div>
<div class="a" style="left:6px;top:3px;width:0;height:0;border-top:4px solid transparent;border-bottom:4px solid transparent;border-right:5px solid #c8c8c8"></div>
<svg class="a" style="left:710px;top:2px" width="8" height="10" viewBox="0 0 8 10"><path d="M1.5,1 L5.5,5 L1.5,9" stroke="#c4c4c4" stroke-width="2" fill="none"/></svg>
<div class="a" style="left:725px;top:0;width:15px;height:14px;background:#484848"></div>
</div>
<div class="a" id="midcol">
<div class="a" style="left:0;top:0;width:31px;height:11px;background:#3e3e3e"></div>
<div class="a" style="left:24px;top:6px;width:4px;height:2px;background:#b0b0b0"></div>
<div class="a" style="left:0;top:67px;width:31px;height:1px;background:#3c3c3c"></div>
<svg class="a" style="left:7px;top:24px" width="18" height="22" viewBox="0 0 18 22"><path d="M13,2 l3,0 l-1.5,2z" fill="#9a9a9a"/><path d="M3,8 H8 L10,10.5 L13,8 V19 H3 V15 H9" stroke="#d6d6d6" stroke-width="2" fill="none"/><rect x="4" y="16" width="7" height="3" fill="#d6d6d6"/></svg>
</div>
<!--/SC-->
<!--RP--><div class="a" id="rp">
<!-- top strip -->
<div class="a" style="left:0;top:0;width:204px;height:11px;background:#3e3e3e"></div>
<div class="a" style="left:196px;top:5px;width:4px;height:3px;background:#b8b8b8"></div>
<!-- tab row 1 -->
<div class="a" style="left:0;top:11px;width:204px;height:20px;background:#3d3d3d"></div>
<div class="a" style="left:0;top:11px;width:43px;height:21px;background:#4a4a4a"></div>
<div class="a" style="left:44px;top:11px;width:62px;height:20px;background:#505050;border:1px solid #3a3a3a;border-top-color:#585858"></div>
<span class="t" style="left:9px;top:14px;font-size:12.5px;color:#e2e2e2;transform:scaleX(.95)">Infos</span>
<span class="t" style="left:52px;top:14px;font-size:12.5px;color:#e6e6e6;transform:scaleX(.88)">Channels</span>
<div class="a" style="left:192px;top:18px;width:7px;height:2px;background:#c8c8c8"></div>
<div class="a" style="left:192px;top:22px;width:7px;height:2px;background:#c8c8c8"></div>
<!-- sub row -->
<div class="a" style="left:0;top:31px;width:204px;height:28px;background:#4b4b4b;border-bottom:1px solid #3a3a3a"></div>
<div class="a" style="left:79px;top:36px;width:76px;height:19px;background:#535353"></div>
<span class="t" style="left:12px;top:39px;font-size:12.5px;color:#dedede;transform:scaleX(.8)">RGB</span>
<span class="t" style="left:45px;top:40px;font-size:11px;color:#d0d0d0;transform:scaleX(.88)">Dbave</span>
<span class="t" style="left:85px;top:39px;font-size:12px;color:#d2d2d2;transform:scaleX(.95)">Eingptz</span>
<svg class="a" style="left:190px;top:41px" width="10" height="8" viewBox="0 0 10 8"><path d="M1,6.5 L5,2 L9,6.5" stroke="#c8c8c8" stroke-width="2" fill="none"/></svg>
<!-- scrollbar 1 -->
<div class="a" style="left:188px;top:59px;width:16px;height:388px;background:#444;border-left:1px solid #3c3c3c"></div>
<div class="a" style="left:190px;top:70px;width:12px;height:328px;background:#5a5a5a"></div>
<svg class="a" style="left:190px;top:433px" width="10" height="8" viewBox="0 0 10 8"><path d="M1,1.5 L5,6 L9,1.5" stroke="#c8c8c8" stroke-width="2" fill="none"/></svg>
<!-- Red Green Blue row -->
<div class="a" style="left:0;top:59px;width:188px;height:28px;background:#4c4c4c;border-bottom:1px solid #3a3a3a"></div>
<div class="eye" style="top:67px"></div>
<div class="th" style="top:63px"><svg width="16" height="16" viewBox="0 0 16 16"><path d="M3,9 L7,7 L9,9 L13,5 M6,4 L8,8 M8,8 L7,12 M4,12 H6 M10,11 H12" stroke="#5a5a5a" stroke-width="1" fill="none"/></svg></div>
<span class="t" style="left:56px;top:67px;font-size:12.5px;color:#dedede;transform:scaleX(.8)">Red</span>
<span class="t" style="left:88px;top:67px;font-size:12.5px;color:#dedede;transform:scaleX(.86)">Green</span>
<span class="t" style="left:133px;top:67px;font-size:12.5px;color:#dedede;transform:scaleX(.9)">Blue</span>
<div class="tri" style="left:165px;top:71px"></div>
<!-- preview -->
<!--PV--><div class="a" style="left:29px;top:88px;width:126px;height:99px;background:#2e2e2e"></div><svg class="a" style="left:30px;top:89px" width="124" height="97" viewBox="84 117 650 715" preserveAspectRatio="none"><g><rect x="84" y="117" width="650" height="715" fill="url(#gSky)"/>
<g filter="url(#soft)">
<path d="M386,381 Q385,370 395,368 L438,360.5 Q448,359 452,367 L494,459 Q496,464 490,465.5 L456,473 L436,470 Z" fill="url(#gBlk)"/>
<path d="M527,471 L589,434 Q597,429 604,436 L734,558 L745,568 L745,705 L560,705 L565,656 L589,543 Z" fill="url(#gRM)"/>
<path d="M74,552 L253,428.5 Q260,423.5 265,430.5 L291,469 L305,478 L330,610 L300,700 L74,700 Z" fill="url(#gLM)"/>
<path d="M311.6,415.5 L319,420.4 L320,429 L315,450 L309,464 L305,479 L291.5,468.5 Z" fill="#a2a2a2"/>
<g clip-path="url(#cDark)">
<rect x="300" y="335" width="300" height="330" fill="url(#gHx)"/><rect x="430" y="455" width="170" height="75" fill="url(#gHxT)"/>
<path d="M311,402 L331,350 Q338,339 347,347 L440,466 L468,474 Q483,488 478,503 L466,528 L447,563 L427,587 L358,629 L330,610 L305,479 L308.7,464 L314.5,450 L319.8,429 L318.6,420.4 L309,414 Z" fill="url(#gPk)"/>
<rect x="300" y="335" width="300" height="330" fill="url(#gShade)"/>
<ellipse cx="316" cy="409" rx="5" ry="6" fill="#6e6e6e" filter="url(#soft2)"/><path d="M309,464 L318,461 L317,469 L306,478 Z" fill="#8e8e8e" fill-opacity=".8"/>
</g>
<path d="M390,663 L404,660 L503,638 L649,689 L745,679 L745,800 L390,800 Z" fill="url(#gMid)"/>
<path d="M233,598 L283,579 L358,629 L404,660 L446,690 L540,745 L540,800 L180,800 L198,680 Z" fill="url(#gHill)"/>
<path d="M122,632 L233,598 L198,680 Z" fill="#b6b6b6"/>
<path d="M74,589 L84,598 L122,632 L198,680 L287,673 L344,675 L446,724 L500,745 L500,800 L74,800 Z" fill="url(#gFL)"/>
</g>
<rect x="74" y="650" width="671" height="190" fill="url(#gFade)"/>
<path d="M74,766 L84,765 L270,747 L446,727 L643,705 L734,695 L745,694 L745,842 L74,842 Z" fill="url(#gFloor)" filter="url(#soft)"/>
<path d="M649,689 L745,679 L745,694 L643,705 Z" fill="#bcbcbc" filter="url(#soft)"/>
</g></svg><!--/PV-->
<svg class="a" style="left:173px;top:177px" width="10" height="10" viewBox="0 0 10 10"><path d="M5,0.5 L6,3.8 L9.5,4 L6.6,6 L8,9.5 L5,7.2 L2,9.5 L3.4,6 L0.5,4 L4,3.8Z" fill="#e0e0e0"/></svg>
<!-- alpha row -->
<div class="a" style="left:0;top:243px;width:188px;height:29px;background:#4c4c4c;border-top:1px solid #3a3a3a;border-bottom:1px solid #3a3a3a"></div>
<div class="eye" style="top:252px"></div>
<span class="t" style="left:30px;top:253px;font-size:9.5px;color:#c6c6c6;transform:scaleX(.9)">Suas</span>
<span class="t" style="left:59px;top:252px;font-size:12.5px;color:#e4e4e4;transform:scaleX(.93)">Alpha 1</span>
<!-- gap strip -->
<div class="a" style="left:0;top:447px;width:204px;height:11px;background:#3c3c3c;border-top:1px solid #363636"></div>
<div class="a" style="left:196px;top:452px;width:4px;height:3px;background:#b8b8b8"></div>
<!-- tab row 2 -->
<div class="a" style="left:0;top:458px;width:204px;height:19px;background:#3d3d3d"></div>
<div class="a" style="left:0;top:458px;width:46px;height:20px;background:#4a4a4a"></div>
<span class="t" style="left:9px;top:461px;font-size:12.5px;color:#e2e2e2;transform:scaleX(.95)">Infos</span>
<span class="t" style="left:36px;top:464px;font-size:8px;color:#bbb">*</span>
<div class="a" style="left:192px;top:465px;width:7px;height:2px;background:#c8c8c8"></div>
<div class="a" style="left:192px;top:469px;width:7px;height:2px;background:#c8c8c8"></div>
<!-- toolbar row -->
<div class="a" style="left:0;top:477px;width:204px;height:30px;background:#4a4a4a"></div>
<div class="a" style="left:8px;top:486px;width:11px;height:10px;border:1.6px solid #d2d2d2;border-radius:1px"></div>
<svg class="a" style="left:29px;top:485px" width="18" height="12" viewBox="0 0 18 12"><path d="M6,1.5 H17 M6,5 H17 M1,8.5 H17 M6,11 H17 M1,1.5 H3.5 M1,5 H3.5" stroke="#d2d2d2" stroke-width="1.5" fill="none"/></svg>
<span class="t" style="left:61px;top:486px;font-size:11.5px;color:#d6d6d6;transform:scaleX(.95)">20u</span>
<div class="tri" style="left:81px;top:490px;border-left-width:3px;border-right-width:3px;border-top-width:4px"></div>
<div class="a" style="left:98px;top:482px;width:86px;height:21px;background:#505050"></div>
<span class="t" style="left:101px;top:487px;font-size:10.5px;color:#cfcfcf">sed</span>
<div class="a" style="left:124px;top:487px;width:9px;height:10px;border:1.4px solid #cfcfcf;border-radius:1px"></div>
<div class="a" style="left:138px;top:483px;width:19px;height:18px;background:#f4f4f4"></div>
<div class="tri" style="left:165px;top:490px"></div>
<svg class="a" style="left:190px;top:487px" width="10" height="8" viewBox="0 0 10 8"><path d="M1,6.5 L5,2 L9,6.5" stroke="#c8c8c8" stroke-width="2" fill="none"/></svg>
<!-- scrollbar 2 -->
<div class="a" style="left:188px;top:507px;width:16px;height:392px;background:#444;border-left:1px solid #3c3c3c"></div>
<div class="a" style="left:190px;top:511px;width:12px;height:294px;background:#5a5a5a"></div>
<svg class="a" style="left:190px;top:888px" width="10" height="8" viewBox="0 0 10 8"><path d="M1,1.5 L5,6 L9,1.5" stroke="#c8c8c8" stroke-width="2" fill="none"/></svg>
<!-- layer rows -->
<div class="row" style="top:507px;background:#5d86ba;border-bottom-color:#4a6c98"><div class="eye" style="border-color:#e6e6e6"></div><div class="th"><svg width="16" height="16" viewBox="0 0 16 16"><path d="M3,9 L7,7 L9,9 L13,5 M6,4 L8,8 M8,8 L7,12 M4,12 H6 M10,11 H12" stroke="#5a5a5a" stroke-width="1" fill="none"/></svg></div><span class="t" style="left:55px;color:#f2f2f2;transform:scaleX(.86)">Alpha 1</span></div>
<div class="row" style="top:534px"><div class="eye"></div><div class="th"><svg width="16" height="16" viewBox="0 0 16 16"><path d="M3,10 L6,8 L9,9 L12,6 M5,5 V8 M10,10 V12 M4,12 H7" stroke="#666" stroke-width="1" fill="none"/></svg></div><span class="t" style="left:55px;transform:scaleX(.86)">Alpha 1</span></div>
<div class="row" style="top:561px"><div class="eye"></div><div class="th"><svg width="16" height="16" viewBox="0 0 16 16"><path d="M4,9 L7,8 L9,10 L12,6 M8,5 V9 M5,12 H8" stroke="#666" stroke-width="1" fill="none"/></svg></div><span class="t" style="left:54px;transform:scaleX(.845)">Cresen</span></div>
<div class="row" style="top:588px"><div class="eye"></div><div class="th"><svg width="16" height="16" viewBox="0 0 16 16"><path d="M4,9 L7,8 L9,10 L12,7 M9,5 V8 M5,12 H8" stroke="#666" stroke-width="1" fill="none"/></svg></div><span class="t" style="left:55px;transform:scaleX(.86)">Alpha 1</span></div>
<div class="row" style="top:615px"><div class="eye"></div><div class="th"><svg width="16" height="16" viewBox="0 0 16 16"><path d="M4,10 L7,8 L9,10 L12,8 M7,5 V8 M5,12 H9" stroke="#666" stroke-width="1" fill="none"/></svg></div><span class="t" style="left:55px;transform:scaleX(.9)">Lostre (220)</span></div>
<div class="a" style="left:0;top:11px;width:1px;height:905px;background:#404040"></div>
<!-- footer -->
<div class="a" style="left:0;top:898px;width:204px;height:18px;background:#494949;border-top:1px solid #363636"></div>
<div class="a" style="left:42px;top:902px;width:10px;height:10px;border:1.4px solid #d0d0d0;border-radius:1px"></div>
<div class="a" style="left:67px;top:902px;width:10px;height:10px;border:1.4px solid #d0d0d0;border-radius:1px"></div>
<div class="a" style="left:94px;top:902px;width:10px;height:10px;border:1.4px solid #d0d0d0;border-radius:1px"></div>
<svg class="a" style="left:120px;top:902px" width="11" height="10" viewBox="0 0 11 10"><rect x="1" y="1" width="9" height="8" fill="none" stroke="#c4c4c4" stroke-width="1.2"/><path d="M3,3.5 H8 L4,6.5 H8" stroke="#c4c4c4" stroke-width="1" fill="none"/></svg>
<div class="a" style="left:145px;top:902px;width:10px;height:10px;border:1.4px solid #d0d0d0;border-radius:1px"></div>
</div>
<!--/RP-->
<!--ST--><div class="a" id="status">
<div class="a" style="left:0;top:0;width:286px;height:24px;background:#4a4a4a;border-right:1px solid #3a3a3a"></div>
<svg class="a" style="left:9px;top:6px" width="12" height="13" viewBox="0 0 12 13"><path d="M2,4 H6 V2 M3,6 V11 H10 V8 H5" stroke="#c6c6c6" stroke-width="1.4" fill="none"/></svg>
<span class="t" style="left:28px;top:6px;font-size:11.5px;color:#d4d4d4;transform:scaleX(.92)">Sbodte: ctdia</span>
<div class="a" style="left:97px;top:2px;width:1px;height:20px;background:#3c3c3c"></div>
<svg class="a" style="left:104px;top:5px" width="16" height="14" viewBox="0 0 16 14"><path d="M2,1 V12 H14 M4,5 H9 M4,8.5 H13" stroke="#a0a0a0" stroke-width="1.6" fill="none"/></svg>
<svg class="a" style="left:126px;top:5px" width="17" height="14" viewBox="0 0 17 14"><path d="M4,10 Q1,10 1.5,7 Q2,5 4.5,5 Q5.5,2 8.5,2.5 Q11,3 11.5,5.5 Q15,5.5 15,8 Q15,10 12.5,10 Z" fill="#a6a6a6"/><path d="M8.5,6 V12 M6.5,8 L8.5,6 L10.5,8" stroke="#4a4a4a" stroke-width="1.3" fill="none"/></svg>
<svg class="a" style="left:151px;top:5px" width="15" height="14" viewBox="0 0 15 14"><rect x="1" y="3" width="12" height="10" fill="#9c9c9c"/><path d="M4,3 V1 H14 V10" stroke="#a6a6a6" stroke-width="1.4" fill="none"/><path d="M3,11 L6,7 L8,9 L11,5" stroke="#ddd" stroke-width="1.2" fill="none"/></svg>
<div class="a" style="left:172px;top:2px;width:1px;height:20px;background:#3c3c3c"></div>
<svg class="a" style="left:181px;top:5px" width="16" height="14" viewBox="0 0 16 14"><circle cx="5" cy="8" r="3.5" fill="#a6a6a6"/><circle cx="9" cy="5" r="3.5" fill="#a6a6a6"/><circle cx="11" cy="9" r="3" fill="#a6a6a6"/><circle cx="8" cy="7.5" r="1.6" fill="#4a4a4a"/></svg>
<svg class="a" style="left:207px;top:5px" width="16" height="14" viewBox="0 0 16 14"><path d="M2,12.5 L9,9 L12,1.5 L13.5,12.5 Z" fill="#a6a6a6"/></svg>
<svg class="a" style="left:232px;top:5px" width="17" height="14" viewBox="0 0 17 14"><path d="M2,12 L5,6 L8,12 Z" fill="#a6a6a6"/><path d="M6,4 Q10,0 14,4 V11" stroke="#a6a6a6" stroke-width="1.7" fill="none"/><path d="M11.5,9 L14,12.5 L16.5,9 Z" fill="#a6a6a6"/></svg>
<div class="a" style="left:255px;top:2px;width:1px;height:20px;background:#3c3c3c"></div>
<svg class="a" style="left:262px;top:4px" width="16" height="16" viewBox="0 0 16 16"><circle cx="8" cy="8" r="6.6" fill="#b8b8b8"/><path d="M9,3 Q12,5 11,8 Q9,9 10,12 Q13,11 13.5,8 Q13,4 9,3 Z" fill="#4a4a4a"/></svg>
<svg class="a" style="left:876px;top:6px" width="17" height="14" viewBox="0 0 17 14"><path d="M1,2.5 H3 M5,2.5 H8 M10,2.5 H12 M1,6 H4 M6,6 H9 M11,6 H14 M1,10 H3 M4.5,10 H8 M9.5,10 H12 M15,12 l1,1" stroke="#cfcfcf" stroke-width="1.8" fill="none"/></svg>
<svg class="a" style="left:906px;top:4px" width="15" height="16" viewBox="0 0 15 16"><rect x="1" y="1" width="13" height="14" rx="1.5" fill="none" stroke="#d8d8d8" stroke-width="1.5"/><path d="M5.5,5 H9.5 L7,8 Q10,8 9.5,10.5 Q8,12 5.5,11" stroke="#d0d0d0" stroke-width="1.3" fill="none"/></svg>
<svg class="a" style="left:932px;top:5px" width="17" height="15" viewBox="0 0 17 15"><path d="M4,1.5 H10 M1.5,4 V13.5 H5 M15.5,4 V13.5 H13" stroke="#cfcfcf" stroke-width="1.3" fill="none"/><rect x="4" y="4" width="9" height="9" fill="none" stroke="#cfcfcf" stroke-width="1.3"/><path d="M6,7 H11 M6,10 H11" stroke="#cfcfcf" stroke-width="1.5"/></svg>
<span class="t" style="left:968px;top:7px;font-size:11px;color:#a6a6a6;transform:scaleX(.95)">8:00:8a</span>
</div><!--/ST-->
</body></html>
